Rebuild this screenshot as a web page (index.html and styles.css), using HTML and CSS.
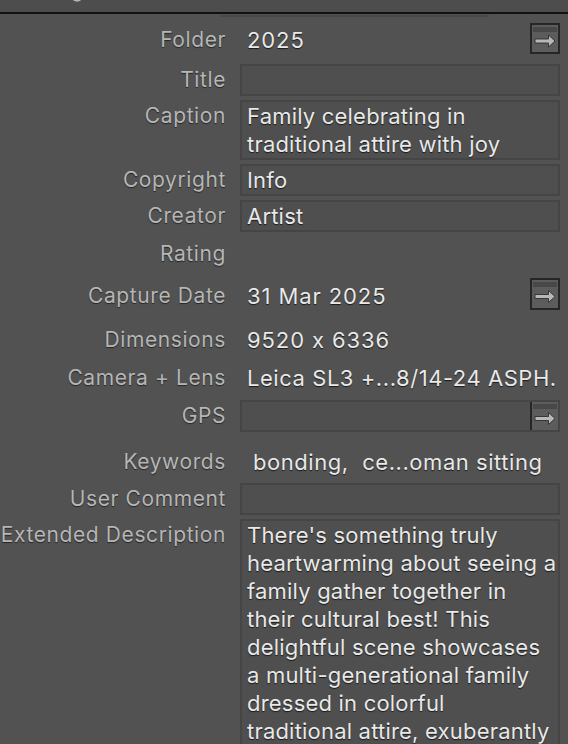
FILE: index.html
```html
<!DOCTYPE html>
<html>
<head>
<meta charset="utf-8">
<link rel="stylesheet" href="styles.css">
</head>
<body>
<div class="panel">
  <div class="header"><div class="header-text">g</div></div>
  <div class="rule"></div>
  <div class="topline"></div>

  <div class="row r-folder btn-row31">
    <div class="label">Folder</div>
    <div class="value with-btn">
      <span class="txt num">2025</span>
      <svg class="btn" width="30" height="31" viewBox="0 0 30 31"><rect x="1" y="1" width="28" height="29" fill="#5c5c5c" stroke="#262626" stroke-width="2"/><rect x="3" y="4" width="24" height="5" fill="#484848"/><path d="M5 16H18.5V12L25 18L18.5 24V20H5Z" fill="#b8b8b8" stroke="#2e2e2e" stroke-width="0.9" stroke-linejoin="round"/></svg>
    </div>
  </div>

  <div class="row r-title box-row">
    <div class="label">Title</div>
    <div class="value box"></div>
  </div>

  <div class="row r-gap4 box-row">
    <div class="label">Caption</div>
    <div class="value box">Family celebrating in<br>traditional attire with joy</div>
  </div>

  <div class="row r-gap4 box-row">
    <div class="label">Copyright</div>
    <div class="value box">Info</div>
  </div>

  <div class="row r-gap4 box-row">
    <div class="label">Creator</div>
    <div class="value box">Artist</div>
  </div>

  <div class="row r-rating">
    <div class="label">Rating</div>
    <div class="value plain"></div>
  </div>

  <div class="row r-capture btn-row32">
    <div class="label">Capture Date</div>
    <div class="value with-btn">
      <span class="txt num">31 Mar 2025</span>
      <svg class="btn" width="30" height="32" viewBox="0 0 30 32"><rect x="1" y="1" width="28" height="30" fill="#5c5c5c" stroke="#262626" stroke-width="2"/><rect x="3" y="4" width="24" height="5" fill="#484848"/><path d="M5 16.5H18.5V12.5L25 18.5L18.5 24.5V20.5H5Z" fill="#b8b8b8" stroke="#2e2e2e" stroke-width="0.9" stroke-linejoin="round"/></svg>
    </div>
  </div>

  <div class="row r-dims">
    <div class="label">Dimensions</div>
    <div class="value plain num">9520 x 6336</div>
  </div>

  <div class="row r-camera">
    <div class="label">Camera + Lens</div>
    <div class="value plain cam">Leica SL3 +...8/14-24 ASPH.</div>
  </div>

  <div class="row r-gps box-row">
    <div class="label">GPS</div>
    <div class="value box gps">
      <span class="txt"></span>
      <svg class="btn gps-btn" width="30" height="32" viewBox="0 0 30 32"><rect x="1" y="1" width="28" height="30" fill="#5c5c5c" stroke="#262626" stroke-width="2"/><rect x="3" y="4" width="24" height="5" fill="#484848"/><path d="M5 16.5H18.5V12.5L25 18.5L18.5 24.5V20.5H5Z" fill="#b8b8b8" stroke="#2e2e2e" stroke-width="0.9" stroke-linejoin="round"/></svg>
    </div>
  </div>

  <div class="row r-keywords">
    <div class="label">Keywords</div>
    <div class="value plain kw">bonding,&nbsp; ce...oman sitting</div>
  </div>

  <div class="row r-comment box-row">
    <div class="label">User Comment</div>
    <div class="value box"></div>
  </div>

  <div class="row r-gap4 box-row">
    <div class="label">Extended Description</div>
    <div class="value box ext">There's something truly<br>heartwarming about seeing a<br>family gather together in<br>their cultural best! This<br>delightful scene showcases<br>a multi-generational family<br>dressed in colorful<br>traditional attire, exuberantly</div>
  </div>
</div>
</body>
</html>
```

FILE: styles.css
```css
html, body {
  margin: 0;
  padding: 0;
  background: #525252;
}
body {
  width: 568px;
  height: 744px;
  overflow: hidden;
  font-family: Inter, "Liberation Sans", sans-serif;
}
.panel {
  display: flex;
  flex-direction: column;
}
.header {
  height: 12px;
  overflow: hidden;
  background: #4d4d4d;
}
.header-text {
  margin-top: -20px;
  line-height: 20px;
  font-size: 20px;
  padding-left: 71px;
  color: #b4b4b4;
}
.rule {
  height: 2px;
  background: #111111;
}
.topline {
  margin: 1px 0 0 221px;
  width: 268px;
  height: 2px;
  background: #474747;
}
.row {
  display: grid;
  grid-template-columns: 226px 320px;
  column-gap: 14px;
  align-items: start;
}
.label {
  text-align: right;
  white-space: nowrap;
  font-size: 21px;
  letter-spacing: 0.6px;
  line-height: 28px;
  color: #b6b6b6;
  text-shadow: 0 1px 1px rgba(0, 0, 0, 0.55);
}
.box-row .label {
  padding-top: 2px;
}
.btn-row31 .label {
  padding-top: 3px;
}
.btn-row32 .label {
  padding-top: 4px;
}
.value {
  font-size: 22px;
  letter-spacing: 0.2px;
  line-height: 28px;
  color: #e9e9e9;
  white-space: nowrap;
  text-shadow: 0 1px 1px rgba(0, 0, 0, 0.7);
}
.num {
  letter-spacing: 0.9px;
}
.plain {
  padding-left: 7px;
  min-height: 28px;
}
.cam {
  letter-spacing: 0.55px;
}
.kw {
  padding-left: 13px;
  letter-spacing: 0.55px;
}
.box {
  border: 2px solid #454545;
  background: #4f4f4f;
  padding: 0 5px;
  min-height: 28px;
  overflow: hidden;
}
.with-btn {
  display: flex;
  justify-content: space-between;
  align-items: flex-end;
  padding-left: 7px;
}
.with-btn .txt {
  line-height: 28px;
}
.btn {
  display: block;
  flex: none;
}
.gps {
  display: flex;
  justify-content: space-between;
  padding-right: 0;
}
.gps-btn {
  margin: -2px -2px -2px 0;
}
.r-folder { margin-top: 6px; }
.r-title { margin-top: 10px; }
.r-gap4 { margin-top: 4px; }
.r-rating { margin-top: 8px; }
.r-capture { margin-top: 10px; }
.r-dims { margin-top: 16px; }
.r-camera { margin-top: 10px; }
.r-gps { margin-top: 8px; }
.r-keywords { margin-top: 16px; }
.r-comment { margin-top: 7px; }
.ext {
  height: 240px;
}
```
